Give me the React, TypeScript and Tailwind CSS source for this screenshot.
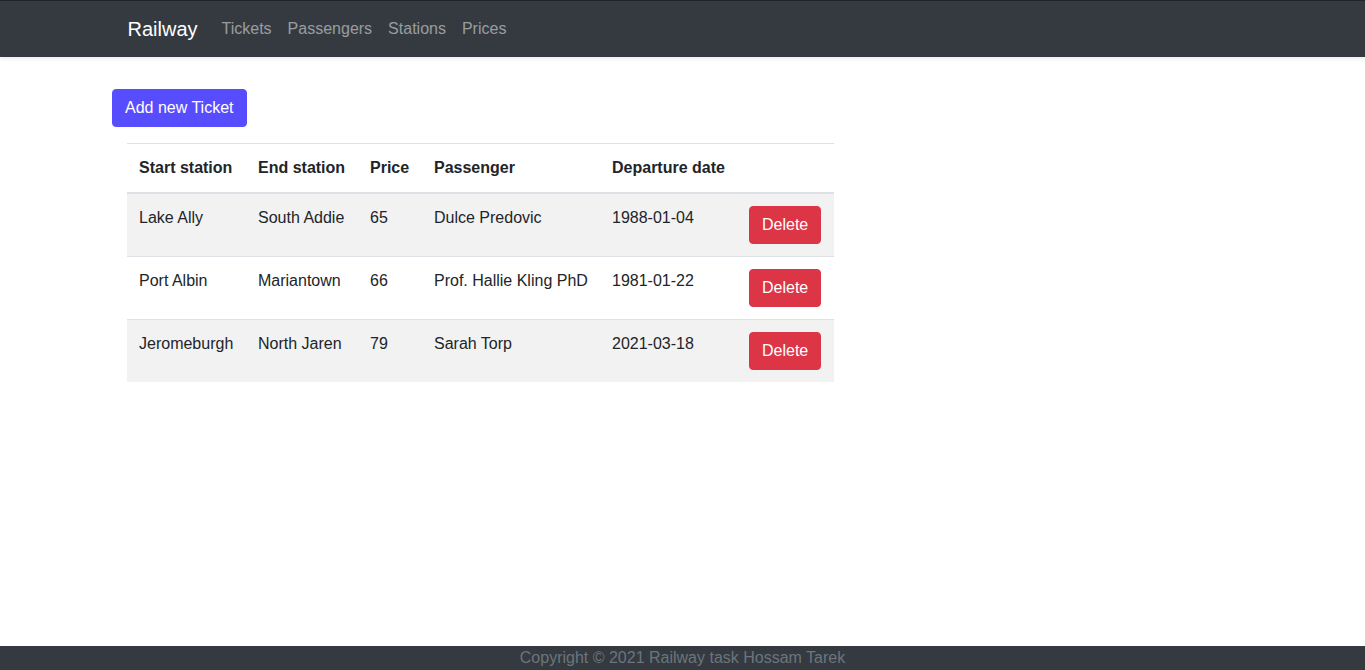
const tickets = [
  { start: 'Lake Ally', end: 'South Addie', price: 65, passenger: 'Dulce Predovic', date: '1988-01-04' },
  { start: 'Port Albin', end: 'Mariantown', price: 66, passenger: 'Prof. Hallie Kling PhD', date: '1981-01-22' },
  { start: 'Jeromeburgh', end: 'North Jaren', price: 79, passenger: 'Sarah Torp', date: '2021-03-18' },
];

const links = ['Tickets', 'Passengers', 'Stations', 'Prices'];

const columns = [
  { label: 'Start station', width: 'w-[119px]' },
  { label: 'End station', width: 'w-[112px]' },
  { label: 'Price', width: 'w-[64px]' },
  { label: 'Passenger', width: 'w-[178px]' },
  { label: 'Departure date', width: 'w-[137px]' },
  { label: '', width: 'w-[97px]' },
];

export default function App() {
  return (
    <div className="min-h-screen flex flex-col bg-white text-[#212529] text-base leading-6 font-['Liberation_Sans',Arial,sans-serif]">
      {/* Navbar */}
      <nav className="bg-[#343a40] border-t border-[#212529] shadow-[0_2px_4px_rgba(0,0,0,0.08)]">
        <div className="w-[1140px] mx-auto px-[15px] py-2 flex items-center">
          <a className="text-white text-xl leading-[30px] py-[5px] mr-4">Railway</a>
          <ul className="flex">
            {links.map((l) => (
              <li key={l}>
                <a className="block px-2 py-2 text-white/50">{l}</a>
              </li>
            ))}
          </ul>
        </div>
      </nav>

      {/* Content */}
      <main className="w-[1141px] mx-auto pt-8">
        <button className="bg-[#584cff] text-white rounded px-3 py-[6px] leading-6 border border-[#584cff]">
          Add new Ticket
        </button>
        <div className="px-[15px] mt-4">
          <table className="border-collapse table-fixed w-[707px]">
            <thead>
              <tr>
                {columns.map((c, i) => (
                  <th
                    key={i}
                    className={`${c.width} text-left font-bold align-bottom p-3 border-t border-b-2 border-[#dee2e6] whitespace-nowrap`}
                  >
                    {c.label}
                  </th>
                ))}
              </tr>
            </thead>
            <tbody>
              {tickets.map((t) => (
                <tr key={t.start} className="odd:bg-[#f2f2f2]">
                  <td className="p-3 align-top border-t border-[#dee2e6] whitespace-nowrap">{t.start}</td>
                  <td className="p-3 align-top border-t border-[#dee2e6] whitespace-nowrap">{t.end}</td>
                  <td className="p-3 align-top border-t border-[#dee2e6]">{t.price}</td>
                  <td className="p-3 align-top border-t border-[#dee2e6] whitespace-nowrap">{t.passenger}</td>
                  <td className="p-3 align-top border-t border-[#dee2e6]">{t.date}</td>
                  <td className="p-3 align-top border-t border-[#dee2e6]">
                    <button className="bg-[#dc3545] text-white rounded px-3 py-[6px] leading-6 border border-[#dc3545]">
                      Delete
                    </button>
                  </td>
                </tr>
              ))}
            </tbody>
          </table>
        </div>
      </main>

      {/* Footer */}
      <footer className="mt-auto bg-[#343a40] h-6 text-center text-[#6c757d] leading-6">
        Copyright © 2021 Railway task Hossam Tarek
      </footer>
    </div>
  );
}
